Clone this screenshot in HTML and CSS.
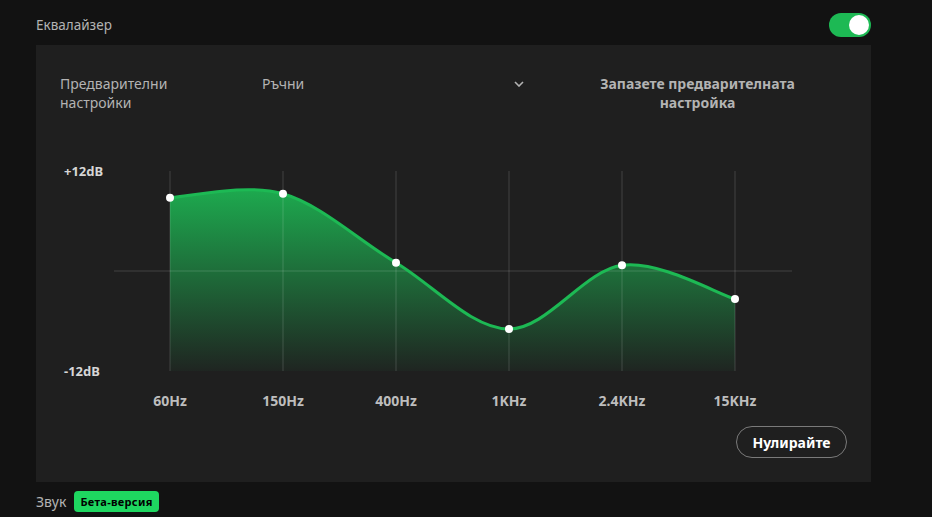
FILE: index.html
```html
<!DOCTYPE html>
<html lang="bg">
<head>
    <meta charset="UTF-8">
    <title>Еквалайзер</title>
    <link rel="stylesheet" href="styles.css">
</head>
<body>
    <div class="page">
        <!-- Заглавие и превключвател -->
        <div class="eq-row">
            <span class="eq-title">Еквалайзер</span>
            <div class="toggle"><span class="knob"></span></div>
        </div>

        <div class="panel">
            <!-- Предварителни настройки -->
            <div class="presets">
                <span class="presets-label">Предварителни настройки</span>
                <div class="presets-select">
                    <span>Ръчни</span>
                    <svg class="chevron" width="10" height="6" viewBox="0 0 10 6">
                        <path d="M1 1 L5 5 L9 1" fill="none" stroke="#b3b3b3" stroke-width="1.6"/>
                    </svg>
                </div>
                <div class="presets-save"><span>Запазете предварителната настройка</span></div>
            </div>

            <!-- Графика -->
            <svg class="chart" width="787" height="270" viewBox="60 150 787 270">
                <defs>
                    <linearGradient id="fillGrad" gradientUnits="userSpaceOnUse" x1="0" y1="186" x2="0" y2="372">
                        <stop offset="0" stop-color="#1db954" stop-opacity="0.92"/>
                        <stop offset="1" stop-color="#1db954" stop-opacity="0.04"/>
                    </linearGradient>
                </defs>

                <path class="area" d="M170 198.7 C188.8 198 245.3 183.9 283 194.7 C320.7 205.5 358.3 241.15 396 263.7 C433.7 286.25 471.3 329.6 509 330 C546.7 330.4 584.3 271.3 622 266.3 C659.7 261.3 716.2 294.4 735 300 L735 372 L170 372 Z"/>

                <g class="grid">
                    <line x1="114" y1="272" x2="792" y2="272"/>
                    <line x1="170" y1="172" x2="170" y2="372"/>
                    <line x1="283" y1="172" x2="283" y2="372"/>
                    <line x1="396" y1="172" x2="396" y2="372"/>
                    <line x1="509" y1="172" x2="509" y2="372"/>
                    <line x1="622" y1="172" x2="622" y2="372"/>
                    <line x1="735" y1="172" x2="735" y2="372"/>
                </g>

                <path class="curve" d="M170 198.7 C188.8 198 245.3 183.9 283 194.7 C320.7 205.5 358.3 241.15 396 263.7 C433.7 286.25 471.3 329.6 509 330 C546.7 330.4 584.3 271.3 622 266.3 C659.7 261.3 716.2 294.4 735 300"/>

                <g class="dots">
                    <circle cx="170" cy="198.7" r="4"/>
                    <circle cx="283" cy="194.7" r="4"/>
                    <circle cx="396" cy="263.7" r="4"/>
                    <circle cx="509" cy="330" r="4"/>
                    <circle cx="622" cy="266.3" r="4"/>
                    <circle cx="735" cy="300" r="4"/>
                </g>

                <text class="db-label" x="64" y="177">+12dB</text>
                <text class="db-label" x="64" y="377">-12dB</text>

                <g class="freq">
                    <text x="170" y="407">60Hz</text>
                    <text x="283" y="407">150Hz</text>
                    <text x="396" y="407">400Hz</text>
                    <text x="509" y="407">1KHz</text>
                    <text x="622" y="407">2.4KHz</text>
                    <text x="735" y="407">15KHz</text>
                </g>
            </svg>

            <div class="actions">
                <button class="reset-btn">Нулирайте</button>
            </div>
        </div>

        <!-- Звук -->
        <div class="sound-row">
            <span class="sound-title">Звук</span>
            <span class="badge">Бета-версия</span>
        </div>
    </div>
</body>
</html>
```

FILE: styles.css
```css
/* Grundlayout */
body {
    margin: 0;
    background-color: #121212;
    color: #b3b3b3;
    font-family: "Noto Sans", "Open Sans", sans-serif;
    overflow: hidden;
}

.page {
    padding: 0 61px 0 36px;
}

/* Еквалайзер-Zeile */
.eq-row {
    display: flex;
    justify-content: space-between;
    align-items: center;
    margin-top: 12px;
    height: 25px;
}

.eq-title {
    font-size: 13.5px;
    color: #b3b3b3;
}

.toggle {
    width: 42px;
    height: 24px;
    box-sizing: border-box;
    padding: 2px;
    border-radius: 12px;
    background-color: #1db954;
    display: flex;
    justify-content: flex-end;
    align-items: center;
}

.knob {
    width: 20px;
    height: 20px;
    border-radius: 50%;
    background-color: #fff;
}

/* Panel */
.panel {
    margin-top: 8px;
    background-color: #1f1f1f;
    height: 437px;
    box-sizing: border-box;
    padding: 29px 24px 23px 24px;
}

.presets {
    display: grid;
    grid-template-columns: 202px 262px 1fr;
    font-size: 14px;
    line-height: 19px;
    height: 38px;
}

.presets-label {
    width: 125px;
}

.presets-select {
    display: flex;
    justify-content: space-between;
    align-items: flex-start;
}

.chevron {
    margin-top: 7px;
}

.presets-save {
    padding-left: 24px;
    text-align: center;
    font-weight: 700;
}

.presets-save span {
    display: inline-block;
    width: 215px;
}

/* Diagramm */
.chart {
    display: block;
    margin-top: 37px;
}

.area {
    fill: url(#fillGrad);
}

.grid line {
    stroke: rgba(255, 255, 255, 0.16);
    stroke-width: 1;
}

.curve {
    fill: none;
    stroke: #1db954;
    stroke-width: 3;
}

.dots circle {
    fill: #fff;
}

.db-label {
    font-family: "Noto Sans", sans-serif;
    font-size: 13px;
    font-weight: 700;
    fill: #d6d6d6;
}

.freq text {
    font-family: "Noto Sans", sans-serif;
    font-size: 14px;
    font-weight: 700;
    fill: #bdbdbd;
    text-anchor: middle;
}

.actions {
    display: flex;
    justify-content: flex-end;
    margin-top: 7px;
}

.reset-btn {
    width: 111px;
    height: 32px;
    border: 1px solid #7a7a7a;
    border-radius: 16px;
    background: transparent;
    color: #fff;
    font-family: "Noto Sans", sans-serif;
    font-size: 14px;
    font-weight: 700;
    cursor: pointer;
}

/* Звук-Zeile */
.sound-row {
    display: flex;
    align-items: center;
    gap: 8px;
    margin-top: 9px;
}

.sound-title {
    font-size: 14px;
    color: #b3b3b3;
}

.badge {
    background-color: #1ed760;
    color: #000;
    font-size: 11px;
    font-weight: 700;
    letter-spacing: 0.3px;
    line-height: 21px;
    padding: 0 6px;
    border-radius: 4px;
}
```
